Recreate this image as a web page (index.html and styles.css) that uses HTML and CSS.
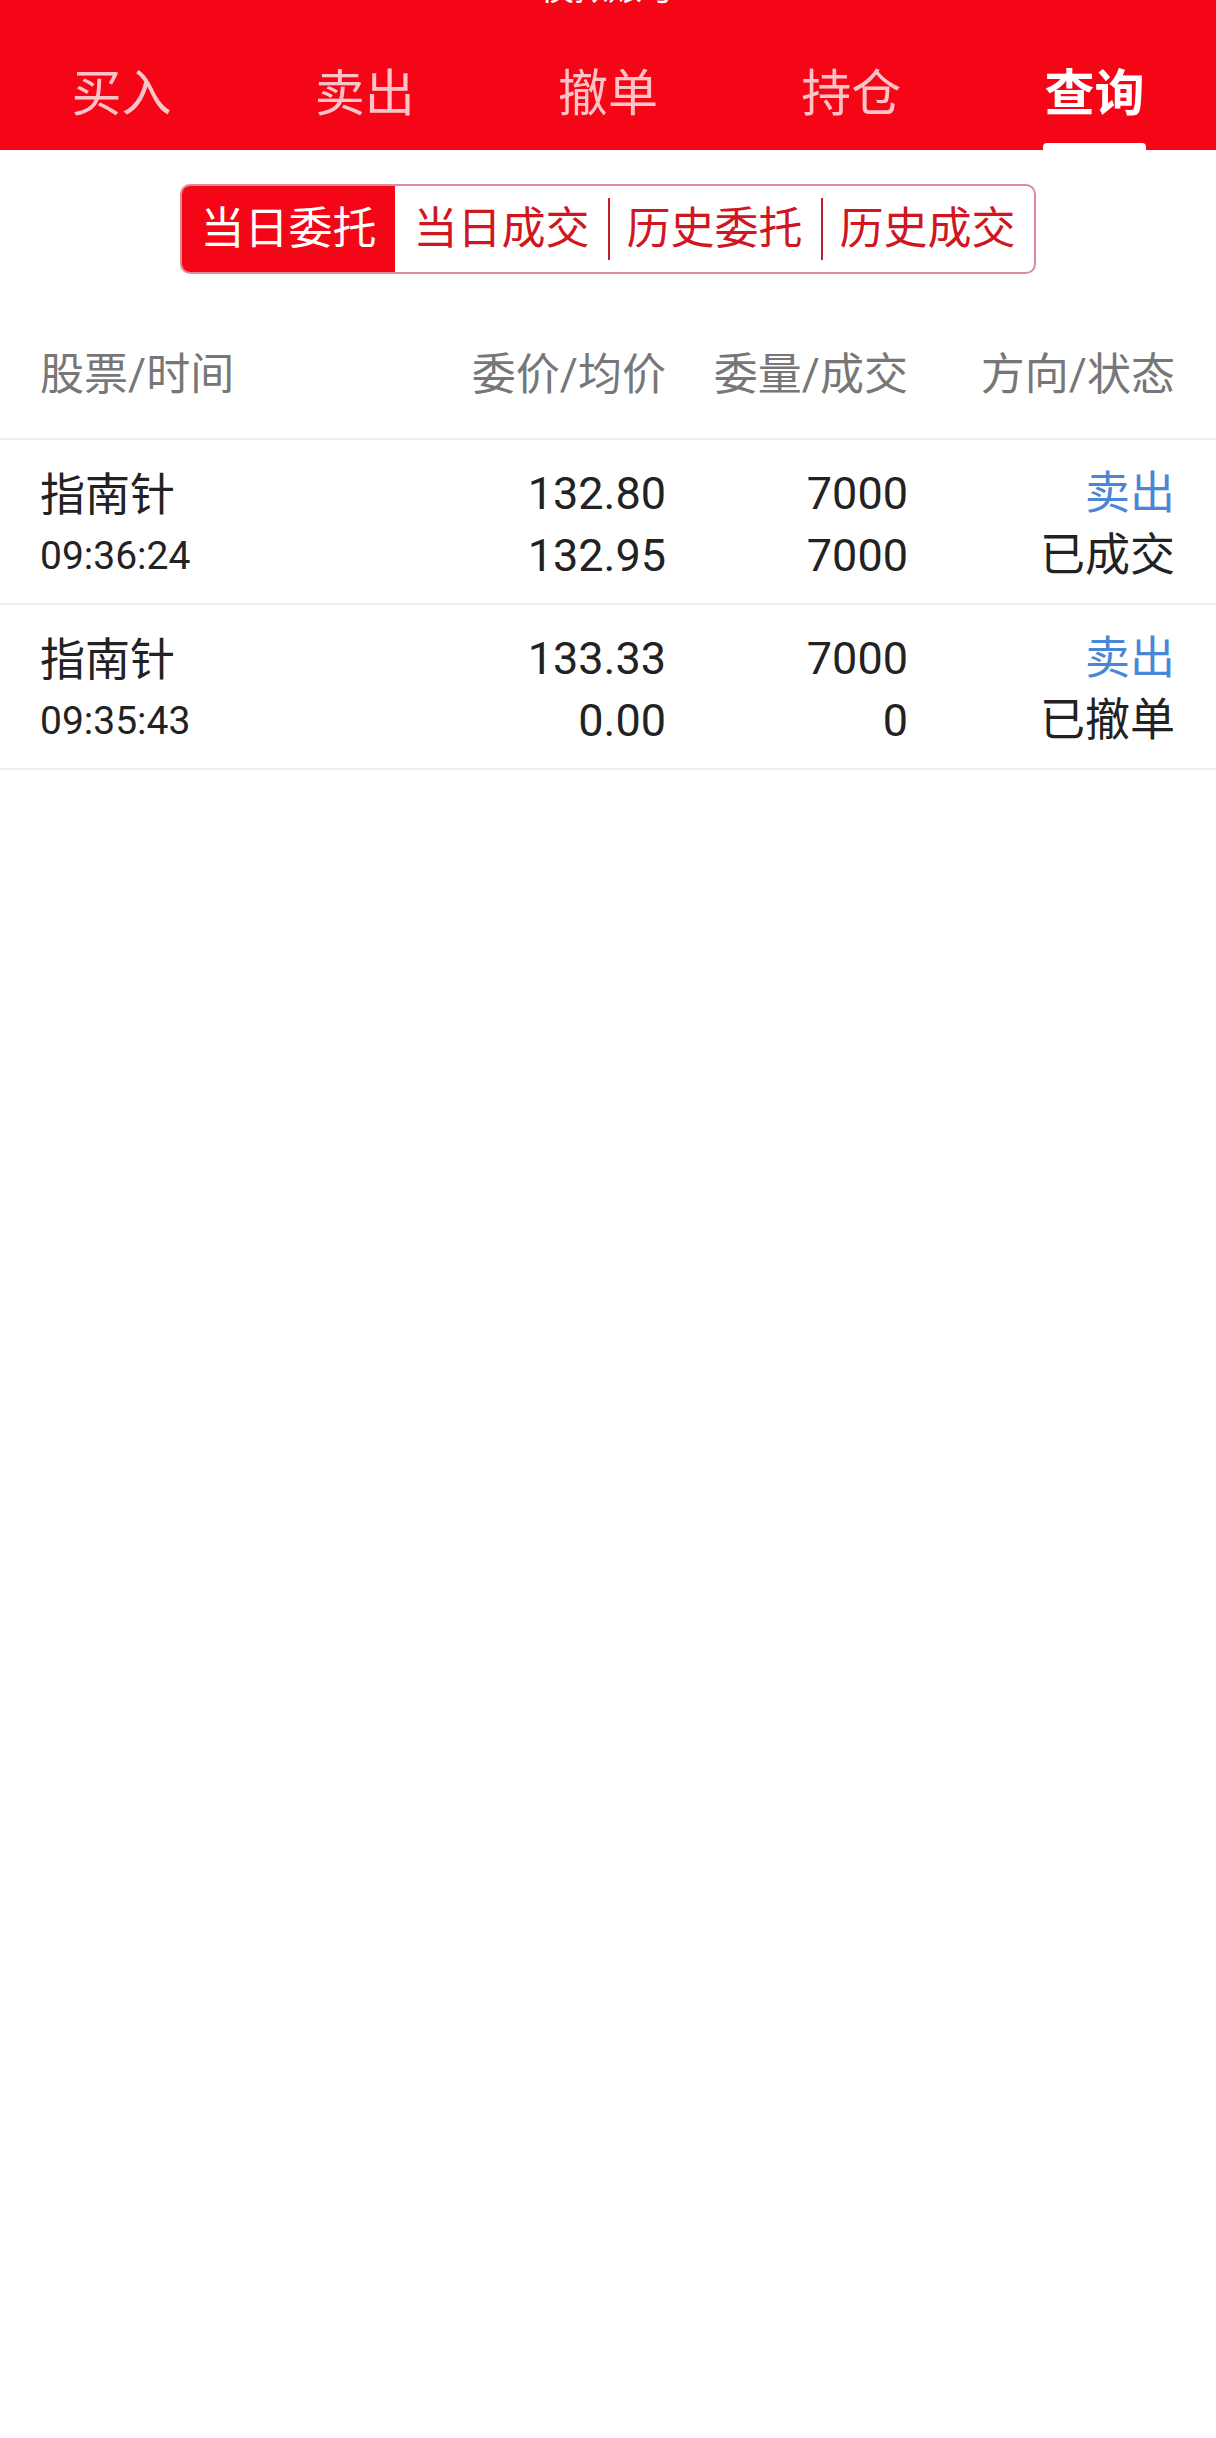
FILE: index.html
```html
<!DOCTYPE html>
<html>
<head>
  <meta charset="utf-8">
  <title>查询</title>
  <link rel="stylesheet" href="styles.css">
</head>
<body>
  <div class="header">
    <div class="title">模拟账号</div>
    <div class="tabs">
      <div class="tab">买入</div>
      <div class="tab">卖出</div>
      <div class="tab">撤单</div>
      <div class="tab">持仓</div>
      <div class="tab active">查询</div>
    </div>
  </div>

  <div class="segments">
    <div class="seg-group">
      <div class="seg active">当日委托</div>
      <div class="seg">当日成交</div>
      <div class="seg">历史委托</div>
      <div class="seg">历史成交</div>
    </div>
  </div>

  <div class="table">
    <div class="row head">
      <div>股票/时间</div>
      <div class="num">委价/均价</div>
      <div class="num">委量/成交</div>
      <div class="num">方向/状态</div>
    </div>

    <div class="row">
      <div><div class="name">指南针</div><div class="time">09:36:24</div></div>
      <div class="num"><div>132.80</div><div>132.95</div></div>
      <div class="num"><div>7000</div><div>7000</div></div>
      <div class="num"><div class="sell">卖出</div><div>已成交</div></div>
    </div>

    <div class="row">
      <div><div class="name">指南针</div><div class="time">09:35:43</div></div>
      <div class="num"><div>133.33</div><div>0.00</div></div>
      <div class="num"><div>7000</div><div>0</div></div>
      <div class="num"><div class="sell">卖出</div><div>已撤单</div></div>
    </div>
  </div>
</body>
</html>
```
FILE: styles.css
```css
body {
  margin: 0;
  padding: 0;
  background: #fff;
  font-family: Roboto, "Noto Sans CJK SC", sans-serif;
  color: #222;
}

.header {
  background-color: #f50617;
  height: 150px;
  overflow: hidden;
}

.title {
  color: #fff;
  font-size: 34px;
  text-align: center;
  line-height: 40px;
  margin-top: -32px;
}

.tabs {
  display: grid;
  grid-template-columns: repeat(5, 1fr);
  margin-top: 52px;
}

.tab {
  text-align: center;
  color: #fcc3c8;
  font-size: 50px;
  line-height: 68px;
  height: 90px;
  position: relative;
}

.tab.active {
  color: #fff;
  font-weight: bold;
}

.tab.active::after {
  content: "";
  position: absolute;
  left: 50%;
  bottom: 0;
  width: 103px;
  height: 7px;
  margin-left: -51px;
  background: #fff;
  border-radius: 4px 4px 0 0;
}

.segments {
  display: flex;
  justify-content: center;
  padding: 34px 0 0 0;
  height: 90px;
}

.seg-group {
  display: flex;
  border: 2px solid #dc8c96;
  border-radius: 10px;
  overflow: hidden;
  height: 86px;
}

.seg {
  width: 213px;
  font-size: 44px;
  line-height: 86px;
  text-align: center;
  color: #d0161f;
  position: relative;
}

.seg + .seg::before {
  content: "";
  position: absolute;
  left: 0;
  top: 12px;
  bottom: 12px;
  width: 2px;
  background: #c0202a;
}

.seg.active {
  background: #f50617;
  color: #fff;
}

.seg.active + .seg::before {
  display: none;
}

.table {
  margin-top: 30px;
}

.row {
  display: grid;
  grid-template-columns: 1fr 242px 242px 267px;
  box-sizing: border-box;
  padding: 6px 41px 0 40px;
  border-bottom: 2px solid #eee;
  height: 165px;
  align-content: center;
  font-size: 45px;
  line-height: 62px;
}

.row.head {
  height: 136px;
  padding-top: 8px;
  color: #777;
  font-size: 44px;
}

.num {
  text-align: right;
}

.name {
  font-size: 45px;
  padding-top: 4px;
  line-height: 58px;
}

.time {
  font-size: 39px;
}

.sell {
  color: #4a86d6;
}
```
